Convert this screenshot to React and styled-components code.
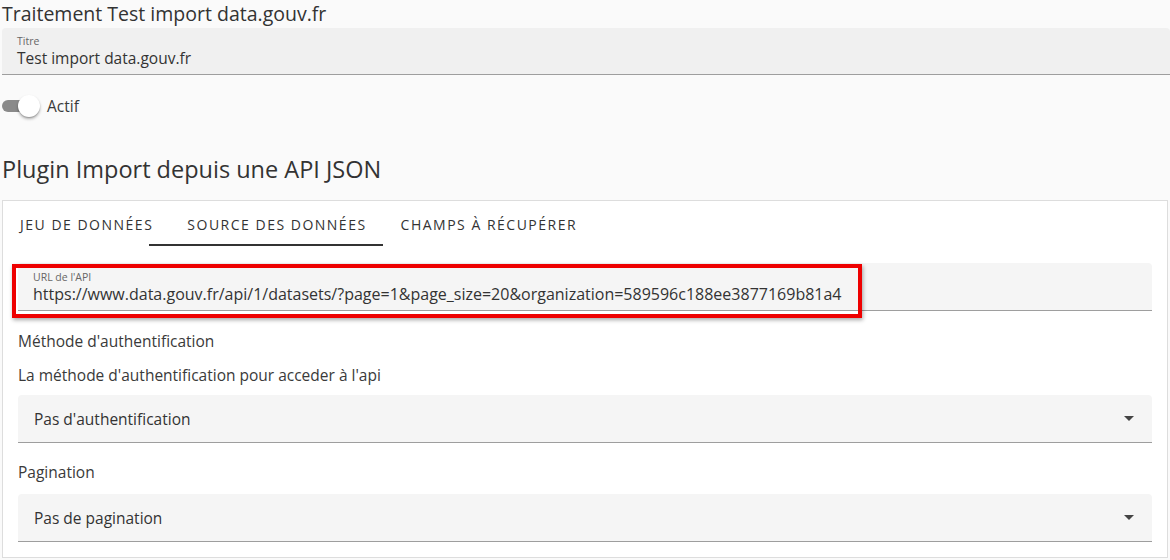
import React from "react";
import styled, { createGlobalStyle } from "styled-components";

const GlobalStyle = createGlobalStyle`
    body {
        margin: 0;
        background: #fafafa;
        font-family: "Open Sans", "Noto Sans", sans-serif;
        color: #3a3a3a;
    }
`;

const Page = styled.div`
    width: 1170px;
    height: 560px;
    overflow: hidden;
    padding: 0 2px;
    box-sizing: border-box;
`;

const PageTitle = styled.h1`
    margin: 0;
    padding-top: 2px;
    font-size: 19.5px;
    font-weight: 400;
    line-height: 24px;
    color: #333;
`;

const Field = styled.div`
    position: relative;
    display: flex;
    flex-direction: column;
    justify-content: center;
    height: ${(p) => p.height || 46}px;
    margin: ${(p) => p.margin || "0"};
    padding: 0 15px;
    background: ${(p) => p.bg || "#f5f5f5"};
    border-bottom: 1px solid #9e9e9e;
    border-radius: 4px 4px 0 0;
`;

const FieldLabel = styled.span`
    font-size: 10.5px;
    line-height: 14px;
    color: #666;
`;

const FieldValue = styled.span`
    font-size: ${(p) => p.size || 15.5}px;
    line-height: 20px;
    color: #333;
    white-space: nowrap;
`;

const SwitchRow = styled.label`
    display: flex;
    align-items: center;
    gap: 9px;
    height: 24px;
    margin: 19px 0 0;
    font-size: 15.5px;
`;

const SwitchTrack = styled.span`
    position: relative;
    display: inline-block;
    width: 36px;
    height: 12px;
    border-radius: 6px;
    background: #8a8a8a;
`;

const SwitchThumb = styled.span`
    position: absolute;
    top: -5px;
    right: -2px;
    width: 22px;
    height: 22px;
    border-radius: 50%;
    background: #fff;
    box-shadow: 0 2px 3px rgba(0, 0, 0, 0.3), 0 1px 1px rgba(0, 0, 0, 0.15);
`;

const SectionTitle = styled.h2`
    margin: 36px 0 0;
    font-size: 23.5px;
    font-weight: 400;
    line-height: 30px;
    color: #333;
`;

const Card = styled.div`
    margin-top: 16px;
    height: 358px;
    background: #fff;
    border: 1px solid #ddd;
    box-sizing: border-box;
    padding: 0 15px;
`;

const Tabs = styled.div`
    display: flex;
    height: 45px;
    margin: 0 -15px;
`;

const Tab = styled.div`
    position: relative;
    display: flex;
    align-items: center;
    padding: 2px 17px 0;
    font-size: 14px;
    letter-spacing: 1.5px;
    text-transform: uppercase;
    color: #333;

    /* slider bar sits a little left of the active tab */
    &::after {
        content: "";
        display: ${(p) => (p.active ? "block" : "none")};
        position: absolute;
        left: -21px;
        right: 1px;
        bottom: 0;
        height: 2px;
        background: #333;
    }
`;

const Highlight = styled.div`
    position: absolute;
    left: -6px;
    top: 1px;
    width: 842px;
    height: 46px;
    border: 4px solid #e00;
    box-shadow: 1px 2px 4px rgba(0, 0, 0, 0.35);
    pointer-events: none;
`;

const Text = styled.p`
    margin: ${(p) => p.margin || "0"};
    font-size: 15.5px;
    line-height: 20px;
    color: #3a3a3a;
`;

const Select = styled.div`
    display: flex;
    align-items: center;
    justify-content: space-between;
    height: 47px;
    margin: ${(p) => p.margin || "0"};
    padding: 0 18px 0 16px;
    background: #f5f5f5;
    border-bottom: 1px solid #9e9e9e;
    border-radius: 4px 4px 0 0;
    font-size: 15.5px;
    color: #333;
`;

const Caret = styled.span`
    width: 0;
    height: 0;
    border-left: 5px solid transparent;
    border-right: 5px solid transparent;
    border-top: 5px solid #444;
`;

export default function App() {
    return (
        <>
            <GlobalStyle />
            <Page>
                <PageTitle>Traitement Test import data.gouv.fr</PageTitle>
                <Field bg="#f0f0f0" margin="2px -2px 0 0">
                    <FieldLabel>Titre</FieldLabel>
                    <FieldValue>Test import data.gouv.fr</FieldValue>
                </Field>
                <SwitchRow>
                    <SwitchTrack>
                        <SwitchThumb />
                    </SwitchTrack>
                    Actif
                </SwitchRow>
                <SectionTitle>Plugin Import depuis une API JSON</SectionTitle>
                <Card>
                    <Tabs>
                        <Tab>Jeu de données</Tab>
                        <Tab active>Source des données</Tab>
                        <Tab>Champs à récupérer</Tab>
                    </Tabs>
                    <Field margin="17px 0 0" height={47}>
                        <FieldLabel>URL de l'API</FieldLabel>
                        <FieldValue size={16}>
                            https://www.data.gouv.fr/api/1/datasets/?page=1&amp;page_size=20&amp;organization=589596c188ee3877169b81a4
                        </FieldValue>
                        <Highlight />
                    </Field>
                    <Text margin="20px 0 0">Méthode d'authentification</Text>
                    <Text margin="14px 0 0">La méthode d'authentification pour acceder à l'api</Text>
                    <Select margin="10px 0 0">
                        Pas d'authentification
                        <Caret />
                    </Select>
                    <Text margin="19px 0 0">Pagination</Text>
                    <Select margin="12px 0 0">
                        Pas de pagination
                        <Caret />
                    </Select>
                </Card>
            </Page>
        </>
    );
}
